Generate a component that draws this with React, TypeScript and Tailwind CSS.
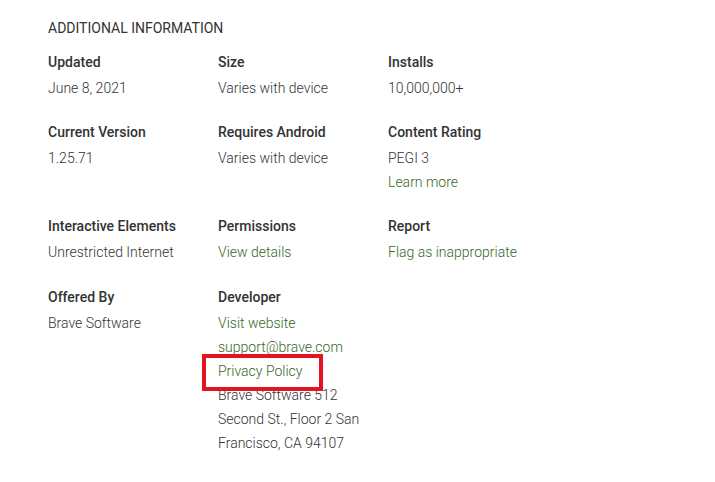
import React from 'react';

type Line = { text: string; link?: boolean; marked?: boolean };

interface InfoItem {
  label: string;
  lines: Line[];
}

const rows: InfoItem[][] = [
  [
    { label: 'Updated', lines: [{ text: 'June 8, 2021' }] },
    { label: 'Size', lines: [{ text: 'Varies with device' }] },
    { label: 'Installs', lines: [{ text: '10,000,000+' }] },
  ],
  [
    { label: 'Current Version', lines: [{ text: '1.25.71' }] },
    { label: 'Requires Android', lines: [{ text: 'Varies with device' }] },
    { label: 'Content Rating', lines: [{ text: 'PEGI 3' }, { text: 'Learn more', link: true }] },
  ],
  [
    { label: 'Interactive Elements', lines: [{ text: 'Unrestricted Internet' }] },
    { label: 'Permissions', lines: [{ text: 'View details', link: true }] },
    { label: 'Report', lines: [{ text: 'Flag as inappropriate', link: true }] },
  ],
  [
    { label: 'Offered By', lines: [{ text: 'Brave Software' }] },
    {
      label: 'Developer',
      lines: [
        { text: 'Visit website', link: true },
        { text: 'support@brave.com', link: true },
        { text: 'Privacy Policy', link: true, marked: true },
        { text: 'Brave Software 512' },
        { text: 'Second St., Floor 2 San' },
        { text: 'Francisco, CA 94107' },
      ],
    },
  ],
];

const InfoBlock: React.FC<{ item: InfoItem }> = ({ item }) => (
  <div className="w-[170px]">
    <div className="leading-6 font-medium text-[#333333] mb-[2px]">{item.label}</div>
    {item.lines.map((line) => (
      <div key={line.text} className="leading-6 font-light">
        {line.marked ? (
          <span className="relative inline-block text-[#33691e]">
            {line.text}
            {/* annotation box drawn around the link */}
            <span className="absolute left-[-16px] right-[-21px] top-[-5px] bottom-[-8px] border-4 border-[#e3141f] pointer-events-none" />
          </span>
        ) : (
          <span className={line.link ? 'text-[#33691e]' : 'text-[#333333]'}>{line.text}</span>
        )}
      </div>
    ))}
  </div>
);

export default function App() {
  return (
    <div
      className="w-[715px] h-[482px] bg-white pl-12 pt-4 text-sm"
      style={{ fontFamily: 'Roboto, "Liberation Sans", sans-serif' }}
    >
      <div className="leading-6 text-[#333333] uppercase">Additional Information</div>
      <div className="mt-[10px] flex flex-col gap-5">
        {rows.map((row, i) => (
          <div key={i} className={i === 3 ? 'flex mt-[1px]' : 'flex'}>
            {row.map((item) => (
              <InfoBlock key={item.label} item={item} />
            ))}
          </div>
        ))}
      </div>
    </div>
  );
}
